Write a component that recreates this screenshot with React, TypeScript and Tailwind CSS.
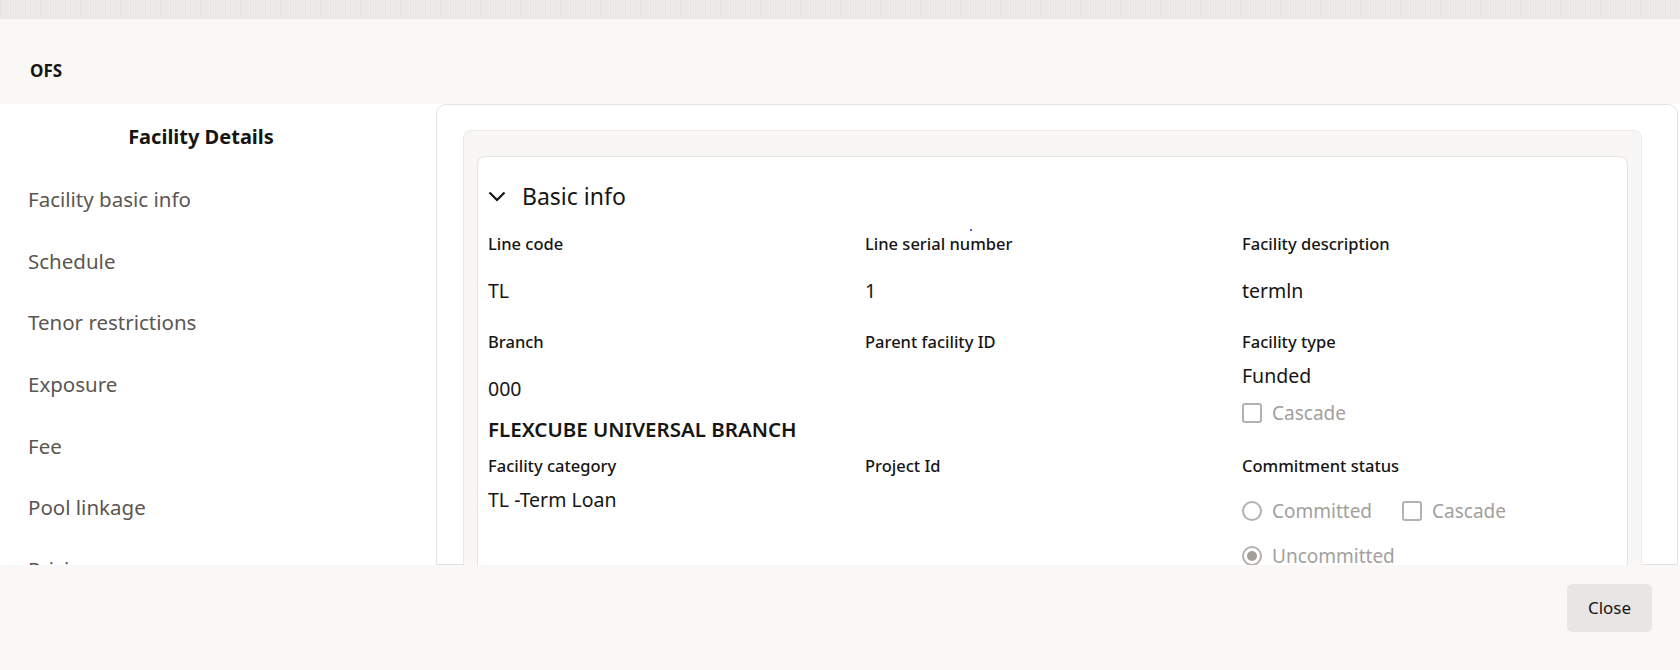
import { ReactNode } from "react";

const navItems = [
  "Facility basic info",
  "Schedule",
  "Tenor restrictions",
  "Exposure",
  "Fee",
  "Pool linkage",
  "Pricing",
];

function Label({ children }: { children: ReactNode }) {
  return <div className="text-[16.5px] leading-[24px] font-medium text-[#161513]">{children}</div>;
}

function Value({ children, className = "" }: { children: ReactNode; className?: string }) {
  return <div className={`text-[19.5px] leading-[28px] text-[#161513] ${className}`}>{children}</div>;
}

function Checkbox({ label }: { label: string }) {
  return (
    <div className="flex items-center gap-[10px] h-[24px]">
      <span className="size-[20px] rounded-[3px] border-2 border-[#b4b1ae] bg-white" />
      <span className="text-[19px] leading-[24px] text-[#a3a09c]">{label}</span>
    </div>
  );
}

function Radio({ label, checked = false }: { label: string; checked?: boolean }) {
  return (
    <div className="flex items-center gap-[10px] h-[24px]">
      <span className="size-[20px] rounded-full border-2 border-[#b4b1ae] bg-white flex items-center justify-center">
        {checked && <span className="size-[10px] rounded-full bg-[#a3a09c]" />}
      </span>
      <span className="text-[19px] leading-[24px] text-[#a3a09c]">{label}</span>
    </div>
  );
}

export default function App() {
  return (
    <div
      className="relative w-[1680px] h-[670px] overflow-hidden flex flex-col bg-[#f9f8f6]"
      style={{ fontFamily: '"Noto Sans", "Open Sans", sans-serif' }}
    >
      {/* textured strip */}
      <div className="h-[19px] shrink-0 bg-[repeating-linear-gradient(90deg,#e3e2e0_0px,#efeeec_2px,#e7e6e4_3px,#f1f0ee_5px)]" />

      {/* header */}
      <div className="h-[85px] shrink-0 bg-[#f9f8f6] pl-[30px] pt-[40px]">
        <span className="text-[17px] leading-[22px] font-bold text-[#161513]">OFS</span>
      </div>

      {/* body */}
      <div className="flex h-[461px] shrink-0 overflow-hidden bg-white">
        <aside className="w-[436px] shrink-0 bg-white">
          <div className="pr-[34px] pt-[17px] text-center text-[20px] leading-[32px] font-bold text-[#161513]">
            Facility Details
          </div>
          <nav className="pt-[31px] pl-[28px] flex flex-col gap-[31.7px]">
            {navItems.map((n) => (
              <div key={n} className="text-[20.5px] leading-[30px] text-[#5b5652]">
                {n}
              </div>
            ))}
          </nav>
        </aside>

        <main className="relative flex-1 mr-[2px] bg-white border border-[#e4e2df] rounded-t-[10px] pl-[26px] pr-[35px] pt-[25px]">
          <div className="bg-[#f8f7f6] border border-[#eceae7] rounded-[8px] pl-[13px] pr-[13px] pt-[25px] h-[600px]">
            <div className="bg-white border border-[#e6e4e1] rounded-[8px] pl-[10px] pt-[23px] h-[600px]">
              {/* section header */}
              <div className="flex items-center h-[32px]">
                <svg width="18" height="11" viewBox="0 0 18 11" className="text-[#161513]">
                  <polyline points="1.5,1.5 9,9 16.5,1.5" fill="none" stroke="currentColor" strokeWidth="2.2" />
                </svg>
                <span className="ml-[16px] text-[23px] leading-[32px] text-[#161513]">Basic info</span>
              </div>

              {/* row 1 */}
              <div className="grid grid-cols-[377px_377px_377px] mt-[20px]">
                <div>
                  <Label>Line code</Label>
                  <Value className="mt-[21px]">TL</Value>
                </div>
                <div>
                  <Label>Line serial number</Label>
                  <Value className="mt-[21px]">1</Value>
                </div>
                <div>
                  <Label>Facility description</Label>
                  <Value className="mt-[21px]">termln</Value>
                </div>
              </div>

              {/* row 2 */}
              <div className="grid grid-cols-[377px_377px_377px] mt-[25px]">
                <div>
                  <Label>Branch</Label>
                  <Value className="mt-[21px]">000</Value>
                  <div className="mt-[13px] text-[20.5px] leading-[26px] font-semibold text-[#161513]">
                    FLEXCUBE UNIVERSAL BRANCH
                  </div>
                </div>
                <div>
                  <Label>Parent facility ID</Label>
                </div>
                <div>
                  <Label>Facility type</Label>
                  <Value className="mt-[8px]">Funded</Value>
                  <div className="mt-[11px]">
                    <Checkbox label="Cascade" />
                  </div>
                </div>
              </div>

              {/* row 3 */}
              <div className="grid grid-cols-[377px_377px_377px] mt-[12px]">
                <div>
                  <Label>Facility category</Label>
                  <Value className="mt-[8px]">TL -Term Loan</Value>
                </div>
                <div>
                  <Label>Project Id</Label>
                </div>
                <div>
                  <Label>Commitment status</Label>
                  <div className="mt-[21px] flex items-center gap-[30px]">
                    <Radio label="Committed" />
                    <Checkbox label="Cascade" />
                  </div>
                  <div className="mt-[21px]">
                    <Radio label="Uncommitted" checked />
                  </div>
                </div>
              </div>
            </div>
          </div>
          <span className="absolute left-[533px] top-[124px] size-[2px] rounded-full bg-[#2a2ad8]" />
        </main>
      </div>

      {/* footer */}
      <div className="flex-1 bg-[#f9f8f6] flex justify-end items-start pt-[19px] pr-[28px]">
        <button className="w-[85px] h-[48px] rounded-[5px] bg-[#e8e6e4] text-[17px] text-[#161513]">
          Close
        </button>
      </div>
    </div>
  );
}
